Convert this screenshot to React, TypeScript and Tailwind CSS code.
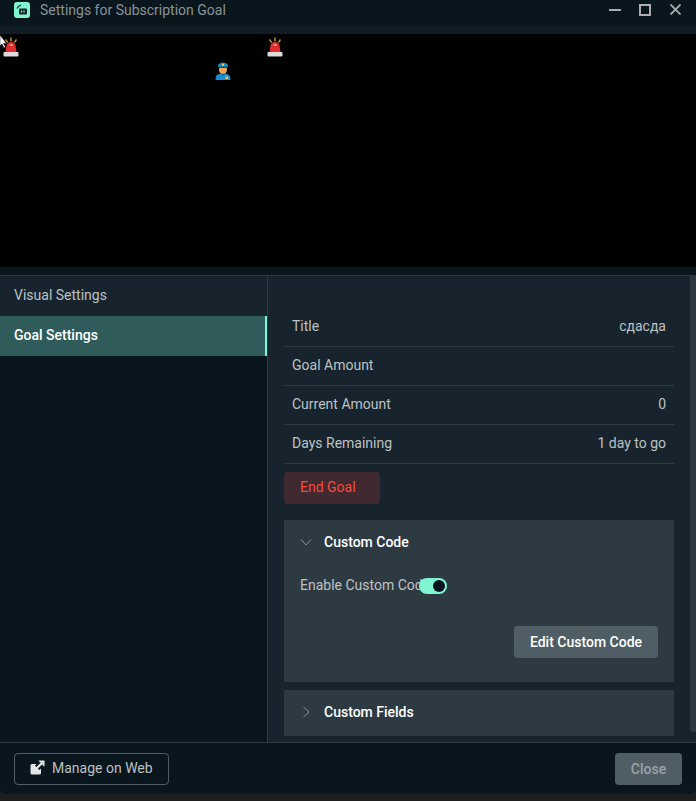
function Siren({ className }: { className: string }) {
  return (
    <svg viewBox="0 0 16 20" className={className}>
      <path d="M8 0.5v4M2.5 2.5l2.2 3M13.5 2.5l-2.2 3" stroke="#b8912f" strokeWidth="1.5" fill="none" />
      <path d="M2.5 15 L3.4 9 Q4 5 8 5 Q12 5 12.6 9 L13.5 15Z" fill="#dd2e2e" />
      <path d="M6.5 7h3.5v1.8H6.5z" fill="#f08a8a" />
      <rect x="0.5" y="15" width="15" height="4.5" rx="1" fill="#dcdcdc" />
    </svg>
  );
}

function Officer({ className }: { className: string }) {
  return (
    <svg viewBox="0 0 16 18" className={className}>
      <path d="M0.5 18 L1 14.5 Q2 11.5 8 11 Q14 11.5 15 14.5 L15.5 18Z" fill="#1c8fd0" />
      <path d="M5.5 11.2 L8 13.8 L10.5 11.2Z" fill="#0e5f8f" />
      <rect x="10.5" y="14.5" width="2.5" height="2.5" fill="#f2c84b" />
      <ellipse cx="8" cy="7.5" rx="4" ry="4.2" fill="#f0a75a" />
      <path d="M2.8 4 Q3 1 8 0.5 Q13 1 13.2 4 L12 5.5 H4Z" fill="#1c8fd0" />
      <rect x="4" y="4.6" width="8" height="1.2" fill="#0e3e5c" />
      <rect x="7" y="1.8" width="2" height="2" fill="#f2c84b" />
    </svg>
  );
}

function LogoIcon() {
  return (
    <svg viewBox="0 0 16 16" className="w-4 h-4">
      <rect width="16" height="16" rx="3" fill="#80f5d2" />
      <path d="M3 6.5 Q4 4 7 3" stroke="#17242d" strokeWidth="1.2" fill="none" />
      <rect x="5" y="6.5" width="8" height="6" rx="1" fill="#17242d" />
      <path d="M7.5 8.5v2M10 8.5v2" stroke="#80f5d2" strokeWidth="1.2" />
    </svg>
  );
}

function WindowControls() {
  return (
    <div className="ml-auto flex items-center -mt-[1px]">
      <svg viewBox="0 0 12 12" className="w-3 h-3 mr-[18px]">
        <path d="M0 6h12" stroke="#a9adb0" strokeWidth="2" />
      </svg>
      <svg viewBox="0 0 12 12" className="w-3 h-3 mr-[19px]">
        <rect x="1" y="1" width="10" height="10" stroke="#a9adb0" strokeWidth="2" fill="none" />
      </svg>
      <svg viewBox="0 0 11 11" className="w-[11px] h-[11px] mr-[15px]">
        <path d="M0.5 0.5l10 10M10.5 0.5l-10 10" stroke="#a9adb0" strokeWidth="1.8" fill="none" />
      </svg>
    </div>
  );
}

function FieldRow({ label, value }: { label: string; value?: string }) {
  return (
    <div className="h-[39px] pt-2 px-2 flex items-start justify-between border-b border-[#2e3a42]">
      <span>{label}</span>
      {value && <span>{value}</span>}
    </div>
  );
}

export default function App() {
  return (
    <div className="relative w-[696px] h-[801px] overflow-hidden bg-[#1e1e1e] text-[14px] leading-5 text-[#bdc2c4] font-['Roboto',sans-serif]">
      {/* title bar */}
      <div className="h-[25px] bg-[#09161d] flex items-center pl-[14px] pb-[7px] pt-[2px]">
        <LogoIcon />
        <span className="ml-[10px] text-[#8a9297]">Settings for Subscription Goal</span>
        <WindowControls />
      </div>
      <div className="h-[9px] bg-[#111d24]" />

      {/* widget preview */}
      <div className="relative h-[233px] bg-black">
        <Siren className="absolute left-[3px] top-[3px] w-4 h-5" />
        <Siren className="absolute left-[267px] top-[3px] w-4 h-5" />
        <Officer className="absolute left-[215px] top-[28px] w-4 h-[18px]" />
        <svg viewBox="0 0 8 14" className="absolute left-0 top-[1px] w-2 h-[14px]">
          <path d="M0 0 L0 11 L2 9 L4 13 L5.5 12 L3.5 8.5 L6.5 8.5Z" fill="#fff" stroke="#000" strokeWidth="0.5" />
        </svg>
      </div>
      <div className="h-2 bg-[#09161d]" />

      {/* main panel */}
      <div className="h-[468px] border-t border-[#2e3a42] flex bg-[#09161d]">
        <div className="w-[267px] shrink-0">
          <div className="h-10 bg-[#17242d] flex items-center pl-[14px] pb-[2px]">Visual Settings</div>
          <div className="h-10 bg-[#2f5c5a] flex items-center pl-[14px] pb-[2px] border-r-2 border-[#80f5d2] text-white font-medium">
            Goal Settings
          </div>
        </div>
        <div className="flex-1 border-l border-[#2e3a42] bg-[#17242d] flex overflow-hidden">
          <div className="w-[390px] ml-4 pt-8 shrink-0">
            <FieldRow label="Title" value="сдасда" />
            <FieldRow label="Goal Amount" />
            <FieldRow label="Current Amount" value="0" />
            <FieldRow label="Days Remaining" value="1 day to go" />
            <button className="mt-2 w-24 h-8 pb-[2px] rounded bg-[#40292f] text-[#fb4a3a] text-left pl-4">End Goal</button>

            <div className="mt-4 h-[162px] bg-[#2d3a42] px-4">
              <div className="h-11 flex items-center text-white font-medium">
                <svg viewBox="0 0 12 12" className="w-3 h-3 mr-3">
                  <path d="M1 3.5l5 5.5 5-5.5" stroke="#8a9297" strokeWidth="1" fill="none" />
                </svg>
                Custom Code
              </div>
              <div className="relative mt-[11px] h-5 w-[126px]">
                <span className="whitespace-nowrap">Enable Custom Code</span>
                <div className="absolute left-[119px] top-[3px] w-[28px] h-4 rounded-full bg-[#80f5d2] flex items-center justify-end pr-[2px]">
                  <div className="w-3 h-3 rounded-full bg-[#09161d]" />
                </div>
              </div>
              <div className="mt-[31px] flex justify-end">
                <button className="w-36 h-8 rounded bg-[#4f5e65] text-white font-medium">Edit Custom Code</button>
              </div>
            </div>

            <div className="mt-2 h-[46px] pb-[2px] bg-[#2d3a42] px-4 flex items-center text-white font-medium">
              <svg viewBox="0 0 12 12" className="w-3 h-3 mr-3">
                <path d="M3.5 1l5.5 5-5.5 5" stroke="#8a9297" strokeWidth="1" fill="none" />
              </svg>
              Custom Fields
            </div>
          </div>
          <div className="ml-4 w-[6px] h-[456px] rounded-bl bg-[#2d3a42]" />
        </div>
      </div>

      {/* footer */}
      <div className="relative h-[52px] border-t border-[#2e3a42] bg-[#09161d] rounded-b-md flex items-center justify-between px-[14px] -mt-[1px]">
        <button className="h-8 w-[155px] pb-[2px] rounded border border-[#4f5e65] flex items-center pl-[15px] text-[#bdc2c4]">
          <svg viewBox="0 0 15 15" className="w-[15px] h-[15px] mr-[7px]">
            <path d="M0.5 5.5a1.5 1.5 0 0 1 1.5-1.5h4.5L5 5.5 9.5 10 11 8.5V13a1.5 1.5 0 0 1-1.5 1.5H2A1.5 1.5 0 0 1 0.5 13Z" fill="#e3e5e6" />
            <path d="M7 8 L12.5 2.5" stroke="#e3e5e6" strokeWidth="2.2" />
            <path d="M8.5 0.5h6v6l-2-1V2.5H10Z" fill="#e3e5e6" />
          </svg>
          Manage on Web
        </button>
        <button className="h-8 w-[67px] rounded bg-[#4f5e65] text-[#9aa3a8] font-medium">Close</button>
      </div>
    </div>
  );
}
